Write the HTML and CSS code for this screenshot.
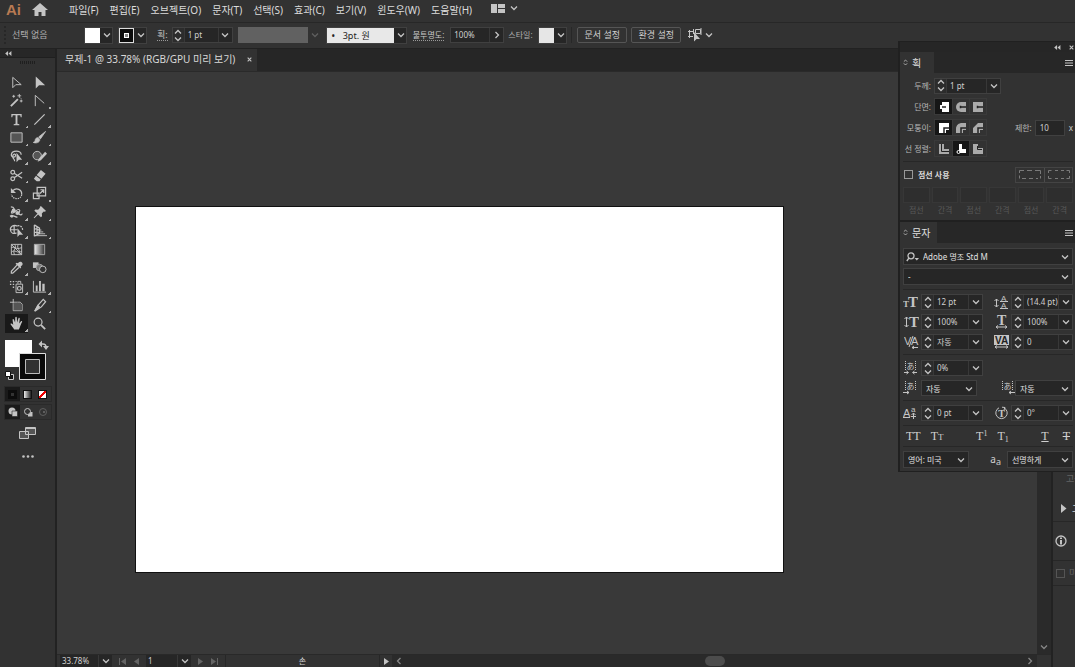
FILE: index.html
```html
<!DOCTYPE html>
<html lang="ko">
<head>
<meta charset="utf-8">
<title>무제-1</title>
<link rel="stylesheet" href="styles.css">
</head>
<body>
<svg class="defs" aria-hidden="true">
  <symbol id="down" viewBox="0 0 8 8"><path d="M1 2.500 4 5.500 7 2.500" class="line"/></symbol>
  <symbol id="right" viewBox="0 0 8 8"><path d="M2.500 1 5.500 4 2.500 7" class="line"/></symbol>
  <symbol id="left" viewBox="0 0 8 8"><path d="M5.500 1 2.500 4 5.500 7" class="line"/></symbol>
  <symbol id="up" viewBox="0 0 8 6"><path d="M1 4.500 4 1.500 7 4.500" class="line"/></symbol>
  <symbol id="dn" viewBox="0 0 8 6"><path d="M1 1.500 4 4.500 7 1.500" class="line"/></symbol>
  <symbol id="collapse" viewBox="0 0 8 6"><path d="M3.500 0v6L0 3zM7.500 0v6L4 3z"/></symbol>
  <symbol id="close" viewBox="0 0 6 6"><path d="M.8.8l4.400 4.400M5.200.8.8 5.200" class="line"/></symbol>
  <symbol id="lines" viewBox="0 0 8 6"><path d="M0 .5h8M0 3h8M0 5.500h8" class="thin"/></symbol>
  <symbol id="fold" viewBox="0 0 6 8"><path d="M1 3 3 1l2 2M1 5l2 2 2-2" class="thin"/></symbol>
</svg>
<div class="app">
  <header class="menubar">
    <span class="logo">Ai</span>
    <button class="home" aria-label="홈"><svg width="16" height="14" viewBox="0 0 16 14"><path d="M8 0 0 7h2.500v6h4V9h3v4h4V7H16z"/></svg></button>
    <nav class="menus">
      <button>파일(F)</button><button>편집(E)</button><button>오브젝트(O)</button><button>문자(T)</button><button>선택(S)</button><button>효과(C)</button><button>보기(V)</button><button>윈도우(W)</button><button>도움말(H)</button>
    </nav>
    <button class="workspace" aria-label="문서 정렬"><svg width="14" height="9" viewBox="0 0 14 9"><path d="M0 0h6v9H0zM7 0h7v4H7zM7 5h7v4H7z"/></svg><svg class="chev"><use href="#down"/></svg></button>
  </header>

  <div class="control">
    <span class="grip"></span>
    <span class="selection">선택 없음</span>
    <button class="swatch" aria-label="칠"><i class="chip white"></i><svg class="chev"><use href="#down"/></svg></button>
    <button class="swatch stroke" aria-label="획 색상"><i class="chip ring"><i></i></i><svg class="chev"><use href="#down"/></svg></button>
    <label class="dotted weight" for="c-weight">획:</label>
    <span class="num wide"><span class="spin"><button aria-label="증가"><svg><use href="#up"/></svg></button><button aria-label="감소"><svg><use href="#dn"/></svg></button></span><input id="c-weight" value="1 pt"><button class="drop" aria-label="목록"><svg class="chev"><use href="#down"/></svg></button></span>
    <button class="profile" aria-label="폭 프로파일" disabled><i></i><svg class="chev"><use href="#down"/></svg></button>
    <button class="brush"><span><b>•</b>3pt. 원</span><svg class="chev"><use href="#down"/></svg></button>
    <label class="dotted" for="c-op">불투명도:</label>
    <span class="num opacity"><input id="c-op" value="100%"><button class="drop" aria-label="불투명도 조절"><svg class="chev"><use href="#right"/></svg></button></span>
    <span class="stylelabel">스타일:</span>
    <button class="swatch style" aria-label="스타일"><i class="chip light"></i><svg class="chev"><use href="#down"/></svg></button>
    <span class="pair"><button class="outlined">문서 설정</button><button class="outlined">환경 설정</button></span>
    <button class="workspace align" aria-label="유사 오브젝트"><svg width="14" height="14" viewBox="0 0 14 14"><path class="thin" d="M0 3.500h6M0 8.500h5M1.500 2v8M7.500 1.500h5v4h-5zM5.500 1v5M13 0v7"/><path d="M6 4v9.500L8.500 11H12z"/></svg><svg class="chev"><use href="#down"/></svg></button>
  </div>

  <main class="work">
    <aside class="tools">
      <div class="toolshead"><svg width="7" height="5"><use href="#collapse"/></svg></div>
      <span class="toolgrip"></span>
      <div class="toolgrid">
        <button aria-label="선택"><svg viewBox="0 0 16 16"><path class="thin" d="M4 2.500v11l3.200-3.200H13z"/></svg></button>
        <button aria-label="직접 선택"><svg viewBox="0 0 16 16"><path d="M4 1.500v13L7.500 11H14z"/></svg></button>
        <button aria-label="자동 선택"><svg viewBox="0 0 16 16"><path class="fat" d="m2 14 7.500-7.500"/><path class="thin" d="M11 1v4M9 3h4M13 7v3M11.500 8.500h3M5 2v3M3.500 3.500h3M12 5l1 1"/></svg></button>
        <button class="more" aria-label="펜"><svg viewBox="0 0 16 16"><path class="thin" d="M3.500 14V2.500L13 11"/></svg></button>
        <button class="more" aria-label="문자 도구"><svg viewBox="0 0 16 16"><path d="M2.500 2h11v3.500h-1L12 3.500H9v9l2 .5v1H5v-1l2-.5v-9H4l-.5 2h-1z"/></svg></button>
        <button class="more" aria-label="선"><svg viewBox="0 0 16 16"><path class="line" d="M2.500 13.500 13.500 2.500"/></svg></button>
        <button class="more" aria-label="사각형"><svg viewBox="0 0 16 16"><path d="M2 3h12v10H2z" fill="#555" stroke="#c4c4c4"/></svg></button>
        <button class="more" aria-label="브러쉬"><svg viewBox="0 0 16 16"><path d="M14.500 1.500 7 7.500 9 9.500zM6.300 8.200c-2 0-2.800 1.300-3 3-.2 1.200-1 1.800-2 2 3 1.300 7 .3 7-3z" stroke="#c4c4c4" stroke-width=".8"/></svg></button>
        <button class="more" aria-label="물방울"><svg viewBox="0 0 16 16"><path class="line" d="M13 6c0-5-10-5-10.500 0-.2 3 4 3.500 4.500 1s-3-2-3 1 2 2 2 5"/><path d="M8 4v10l2.500-2.500H14z"/></svg></button>
        <button class="more" aria-label="Shaper"><svg viewBox="0 0 16 16"><circle cx="5.500" cy="7" r="4.500" fill="#555" stroke="#c4c4c4"/><path d="m6 13.500 1.500-3.500 6.500-7 2 2-6.500 7z"/></svg></button>
        <button class="more" aria-label="가위"><svg viewBox="0 0 16 16"><circle class="line" cx="4" cy="4.500" r="2"/><circle class="line" cx="4" cy="11.500" r="2"/><path class="line" d="m5.500 5.500 8.500 5.500M5.500 10.500 14 4.500"/></svg></button>
        <button aria-label="지우개"><svg viewBox="0 0 16 16"><path d="m9.500 2 5 4-4.500 5.500-5-4zM4.300 8.300l5 4L8 14H5L2 11.500z"/></svg></button>
        <button class="more" aria-label="회전"><svg viewBox="0 0 16 16"><path class="line" d="M4 5c4-4 10-1 9.500 4"/><path class="line" stroke-dasharray="1.500 1" d="M13.500 9c-.5 6-9.500 6-11 0"/><path d="M2 2v5.500h5.500z"/></svg></button>
        <button class="more" aria-label="크기 조절"><svg viewBox="0 0 16 16"><path class="line" d="M5.500 1.500h9v9h-9zM1.500 7.500h6v6h-6z"/><path class="line" d="M8.500 8 12 4.500M9 4h3.500v3.500"/></svg></button>
        <button class="more" aria-label="폭"><svg viewBox="0 0 16 16"><path class="line" d="M2 2c4 0 4 3 2 4s-2 4 1 2 4-4 6-3-2 4 0 5 3 0 3-1M1 12c4-2 5 1 8 1"/><circle cx="5" cy="6" r="2.200"/><circle cx="9" cy="8.500" r="2.200"/><circle cx="3" cy="12" r="1.500"/></svg></button>
        <button class="more" aria-label="퍼펫 뒤틀기"><svg viewBox="0 0 16 16"><path d="m9.500 1 5.500 5.500-1.500.7-1-.2-2 2 .2 3-1.200 1-3-3-4 4.200-.7-.7L5.800 9 2.500 6l1-1.200 3 .2 2-2-.2-1z"/></svg></button>
        <button class="more" aria-label="도형 구성"><svg viewBox="0 0 16 16"><path class="line" d="M9 3.500C5 1 1 4 1.500 7.500S5 12 8 10.500M5.500 3v8M1.500 7.200H9"/><path class="line" stroke-dasharray="2 1" d="M9 3c3-.5 5.500 1 5.500 4.500"/><path d="M9 5.500V15l2.200-2.500H15z"/></svg></button>
        <button class="more" aria-label="원근감"><svg viewBox="0 0 16 16"><path class="line" d="M2.500 2v12M2.500 2 8 5.500v5.500l-5.500 3M5.300 4v8.500M2.500 6 8 7.500M2.500 10H8"/><path class="thin" d="M8 7.500h2M8 9.500h4M7 11.500h7M4 13.500h12"/></svg></button>
        <button aria-label="메쉬"><svg viewBox="0 0 16 16"><path class="thin" d="M2.500 2.500h11v11h-11zM2.500 6c5-2 4 3 11 0M2.500 11c4-4 6 2 11-1M6 2.500c3 4-3 6 0 11M10 2.500c-3 4 4 7 0 11M2.500 2.500l11 11"/></svg></button>
        <button aria-label="그레이디언트"><svg viewBox="0 0 16 16"><defs><linearGradient id="g"><stop stop-color="#eee"/><stop offset="1" stop-color="#333"/></linearGradient></defs><path d="M2.500 2.500h11v11h-11z" fill="url(#g)" stroke="#aaa"/></svg></button>
        <button class="more" aria-label="스포이드"><svg viewBox="0 0 16 16"><path d="M10 3c2-3 6 0 4 2.500L12.500 7l.5 1-1 1-5-5 1-1 1 .5z"/><path class="line" d="m8.500 5.500-6 6.500v2h1.500l6.500-6"/></svg></button>
        <button aria-label="블렌드"><svg viewBox="0 0 16 16"><path d="M1 2.500h6v6H1z"/><circle cx="8" cy="8" r="3.500" fill="#777" stroke="#aaa"/><circle cx="11.500" cy="10" r="3.500" fill="#323232" stroke="#c4c4c4"/></svg></button>
        <button class="more" aria-label="심볼 분무기"><svg viewBox="0 0 16 16"><path class="thin" d="M7.500 5.500h7v9h-7zM9.500 5V2.500h3V5"/><circle class="line" cx="11" cy="10" r="2"/><path d="M1 2h1.500v1.500H1zM4 2h1.500v1.500H4zM1 5h1.500v1.500H1zM4 5h1.500v1.500H4zM7 2h1.200v1.200H7zM4 8h1.500v1.500H4z"/></svg></button>
        <button class="more" aria-label="그래프"><svg viewBox="0 0 16 16"><path class="thin" d="M1.500 2v12H15"/><path d="M4 7h2v6H4zM7.500 2h2v11h-2zM11 5h2.500v8H11z"/></svg></button>
        <button aria-label="대지"><svg viewBox="0 0 16 16"><path class="thin" d="M4.500 1v5M1 4.500h8M4.500 6v7.500h9.500v-7l-2-2H9"/><path d="M5 5h7l2 2v6H5z" fill="#555"/></svg></button>
        <button class="more" aria-label="분할 영역"><svg viewBox="0 0 16 16"><path d="M2 14.500 6 7l3 2.500z"/><path class="line" d="m7 7 5-5.500L14.500 4 10 9.500 3 14z"/></svg></button>
        <button class="more active" aria-label="손"><svg viewBox="0 0 16 16"><path d="M5.500 14.500C4.500 12 2.500 10.500 1.500 8.500c.8-.8 2-.3 3 1L3.800 4c.2-1 1.200-.9 1.500 0L6.500 7l.2-5.500c.3-.9 1.400-.9 1.600 0l.3 5.500 1.500-4.500c.5-.9 1.500-.5 1.400.5L10.800 8l2-2.500c.8-.5 1.500.2 1.100 1-1.400 2.500-1.900 5-3.400 8z"/></svg></button>
        <button aria-label="돋보기"><svg viewBox="0 0 16 16"><circle class="line" cx="6.500" cy="6.500" r="4.200"/><path class="fat" d="m9.800 9.800 4.200 4.200"/></svg></button>
      </div>
      <svg class="fillstroke" width="44" height="42" viewBox="0 0 44 42"><path d="M0 0h27v27H0z" fill="#fff"/><path d="M14.500 13.500h26v26h-26z" fill="#0a0a0a" stroke="#ddd"/><path d="M20.500 19.500h14v14h-14z" fill="#323232" stroke="#bbb"/><path class="line" d="M36 4h2c2 0 3 1 3 3"/><path d="M37 .5v7L33.500 4zM38 6h6l-3 4z"/><path d="M3.500 34.500h5v5h-5z" fill="#111" stroke="#ccc"/><path d="M.5 31.500h5v5h-5z" fill="#fff" stroke="#111"/></svg>
      <div class="modes"><button class="on" aria-label="색상"><i class="solid"></i></button><button aria-label="그레이디언트 칠"><i class="grad"></i></button><button aria-label="없음"><i class="none"></i></button></div>
      <div class="modes draw"><button class="on" aria-label="표준 그리기"><svg viewBox="0 0 10 10"><circle cx="4" cy="4" r="3.500"/><path d="M4 4h5.500v5.500H4z" stroke="#222" stroke-width=".6"/></svg></button><button aria-label="배경 그리기"><svg viewBox="0 0 10 10"><path d="M5 5h4.500v4.500H5z"/><circle cx="4.500" cy="4.500" r="3" fill="#333" stroke="#c4c4c4"/></svg></button><button aria-label="내부 그리기" disabled><svg viewBox="0 0 10 10"><circle class="thin" cx="5" cy="5" r="3.500"/><path d="M5 4h2v2H5z"/></svg></button></div>
      <button class="screen" aria-label="화면 모드"><svg width="17" height="12" viewBox="0 0 17 12"><path d="M.5 4.500h9v7h-9zM6.500.5h10v7h-10z" fill="#555" stroke="#c4c4c4"/><path d="M6.500 1.500h10" class="thin"/></svg></button>
      <button class="dots" aria-label="도구 모음 편집"><svg width="12" height="3" viewBox="0 0 12 3"><circle cx="1.500" cy="1.500" r="1.300"/><circle cx="6" cy="1.500" r="1.300"/><circle cx="10.500" cy="1.500" r="1.300"/></svg></button>
    </aside>

    <section class="doc">
      <div class="tabs"><div class="tab">무제-1 @ 33.78% (RGB/GPU 미리 보기)<button aria-label="닫기"><svg width="5" height="5"><use href="#close"/></svg></button></div></div>
      <div class="view">
        <div class="canvas"><div class="artboard"></div></div>
        <div class="vscroll"><svg class="chev"><use href="#down"/></svg></div>
      </div>
      <footer class="status">
        <input class="zoom" aria-label="확대/축소" value="33.78%"><button class="drop" aria-label="배율 목록"><svg class="chev"><use href="#down"/></svg></button>
        <span class="nav dim"><svg width="8" height="7" viewBox="0 0 8 7"><path d="M0 0h1v7H0zM7 0v7L2 3.500z"/></svg><svg width="5" height="7" viewBox="0 0 5 7"><path d="M5 0v7L0 3.500z"/></svg></span>
        <input class="page" aria-label="대지 번호" value="1"><button class="drop" aria-label="대지 목록"><svg class="chev"><use href="#down"/></svg></button>
        <span class="nav dim"><svg width="5" height="7" viewBox="0 0 5 7"><path d="M0 0v7l5-3.500z"/></svg><svg width="8" height="7" viewBox="0 0 8 7"><path d="M7 0h1v7H7zM1 0v7l5-3.500z"/></svg></span>
        <span class="toolname">손</span>
        <button class="play" aria-label="상태 메뉴"><svg width="5" height="7" viewBox="0 0 5 7"><path d="M0 0v7l5-3.500z"/></svg></button>
        <div class="hscroll"><svg class="chev"><use href="#left"/></svg><i></i><svg class="chev"><use href="#right"/></svg></div>
        <span class="corner"></span>
      </footer>
    </section>

    <aside class="dock">
      <p class="dim">고급</p>
      <p class="opener"><svg width="6" height="9" viewBox="0 0 6 9"><path d="M0 0v9l5.500-4.500z"/></svg>고급</p>
      <p class="info"><svg width="12" height="12" viewBox="0 0 12 12"><circle class="line" cx="6" cy="6" r="5"/><path d="M5 2.500h2v1.500H5zM5 5h2v4.500H5z"/></svg></p>
      <p class="dim check"><input type="checkbox" id="d-prev" disabled><label for="d-prev">미리 보기</label></p>
    </aside>
  </main>

  <div class="float">
    <div class="floathead"><button aria-label="접기"><svg width="7" height="5"><use href="#collapse"/></svg></button><button aria-label="패널 닫기"><svg width="5" height="5"><use href="#close"/></svg></button></div>
    <section>
      <div class="ptabs"><h2><svg width="5" height="7"><use href="#fold"/></svg>획</h2><button aria-label="획 패널 메뉴"><svg width="8" height="6"><use href="#lines"/></svg></button></div>
      <div class="strokebody">
        <div class="srow"><label for="s-w">두께:</label><span class="num thick"><span class="spin"><button aria-label="증가"><svg><use href="#up"/></svg></button><button aria-label="감소"><svg><use href="#dn"/></svg></button></span><input id="s-w" value="1 pt"><button class="drop" aria-label="목록"><svg class="chev"><use href="#down"/></svg></button></span></div>
        <div class="srow"><span>단면:</span><span class="seg"><button class="on" aria-label="절단형"><svg viewBox="0 0 10 10"><path d="M3 0h7v10H3V7H1V3h2z"/><path class="cut" d="M3 5h4"/></svg></button><button aria-label="둥근형"><svg viewBox="0 0 10 10"><path d="M5 0h5v10H5a5 5 0 0 1 0-10z"/><path class="cut" d="M5 5h5M4.500 3.800v2.400"/></svg></button><button aria-label="돌출형"><svg viewBox="0 0 10 10"><path d="M0 0h10v10H0z"/><path class="cut" d="M4 5h6M4.500 3.800v2.400"/></svg></button></span></div>
        <div class="srow"><span>모퉁이:</span><span class="seg"><button class="on" aria-label="각진 연결"><svg viewBox="0 0 10 10"><path d="M0 0h10v7H7v3H0z"/><path class="cut" d="M5 10V5H10"/></svg></button><button aria-label="둥근 연결"><svg viewBox="0 0 10 10"><path d="M10 0v7H7v3H0V6c0-4 3-6 6-6z"/><path class="cut" d="M5 10V5H10"/></svg></button><button aria-label="경사 연결"><svg viewBox="0 0 10 10"><path d="M10 0v7H7v3H0V5l5-5z"/><path class="cut" d="M5 10V5H10"/></svg></button></span><label class="limit" for="s-l">제한:</label><input id="s-l" class="limitbox" value="10"><span class="times">x</span></div>
        <div class="srow"><span>선 정렬:</span><span class="seg"><button aria-label="가운데 정렬"><svg viewBox="0 0 10 10"><path d="M0 0h5v5h5v5H0z"/><path class="cut thincut" d="M2.500 0v7.500H10"/></svg></button><button class="on" aria-label="안쪽 정렬"><svg viewBox="0 0 10 10"><path d="M3 0h3v5h4v4H3z"/><circle cx="2.500" cy="8" r="1.500" fill="#111" stroke="#fff"/></svg></button><button aria-label="바깥쪽 정렬"><svg viewBox="0 0 10 10"><path d="M0 0h5v4h5v6H0z"/><path class="cut thincut" d="M4.500 2v3.500H9"/></svg></button></span></div>
        <div class="dashrow"><input type="checkbox" id="s-d"><label for="s-d">점선 사용</label><span class="dashbtns"><button disabled aria-label="정확한 점선"><svg width="22" height="9" viewBox="0 0 22 9"><path class="thin" d="M.5 8.500v-3M.5 3V.5H5M8 .5h5M16 .5h5.500V4M21.500 6v2.500M3 8.500h4M10 8.500h4M17 8.500h2"/></svg></button><button disabled aria-label="정렬된 점선"><svg width="22" height="9" viewBox="0 0 22 9"><path class="thin" d="M3.500.5h-3v2.500M.5 6v2.500h3M7 .5h3M13 .5h3M18.500.5h3v2.500M21.500 6v2.500h-3M7 8.500h3M13 8.500h3"/></svg></button></span></div>
        <div class="dashes"><label><input disabled>점선</label><label><input disabled>간격</label><label><input disabled>점선</label><label><input disabled>간격</label><label><input disabled>점선</label><label><input disabled>간격</label></div>
      </div>
    </section>
    <section>
      <div class="ptabs second"><h2><svg width="5" height="7"><use href="#fold"/></svg>문자</h2><button aria-label="문자 패널 메뉴"><svg width="8" height="6"><use href="#lines"/></svg></button></div>
      <div class="charbody">
        <div class="fonts">
          <span class="sel family"><svg class="mag" width="13" height="10" viewBox="0 0 13 10"><circle class="line" cx="5" cy="3.800" r="3"/><path class="line" d="M3 6 .8 9"/><path d="M8.500 6H13l-2.200 2.500z"/></svg><select aria-label="글꼴"><option>Adobe 명조 Std M</option></select><svg class="chev"><use href="#down"/></svg></span>
          <span class="sel"><select aria-label="글꼴 스타일"><option>-</option></select><svg class="chev"><use href="#down"/></svg></span>
        </div>
        <div class="fields">
          <svg class="ic" viewBox="0 0 15 14"><text x="0" y="12" class="g" font-size="9">T</text><text x="5" y="12" class="g" font-size="15">T</text></svg><span class="num"><span class="spin"><button aria-label="증가"><svg><use href="#up"/></svg></button><button aria-label="감소"><svg><use href="#dn"/></svg></button></span><input aria-label="글꼴 크기" value="12 pt"><button class="drop" aria-label="목록"><svg class="chev"><use href="#down"/></svg></button></span>
          <svg class="ic" viewBox="0 0 15 14"><path class="thin" d="M2.500 4v8M.5 6l2-2 2 2M.5 10l2 2 2-2M6 13.500h8M6 6.500h8"/><text x="7" y="5.500" class="a" font-size="8">A</text><text x="7" y="12.500" class="a" font-size="8">A</text></svg><span class="num"><span class="spin"><button aria-label="증가"><svg><use href="#up"/></svg></button><button aria-label="감소"><svg><use href="#dn"/></svg></button></span><input aria-label="행간" value="(14.4 pt)"><button class="drop" aria-label="목록"><svg class="chev"><use href="#down"/></svg></button></span>
          <svg class="ic" viewBox="0 0 15 14"><path class="thin" d="M2.500 2v10M.5 4l2-2 2 2M.5 10l2 2 2-2"/><text x="5" y="12" class="g" font-size="15">T</text></svg><span class="num"><span class="spin"><button aria-label="증가"><svg><use href="#up"/></svg></button><button aria-label="감소"><svg><use href="#dn"/></svg></button></span><input aria-label="세로 비율" value="100%"><button class="drop" aria-label="목록"><svg class="chev"><use href="#down"/></svg></button></span>
          <svg class="ic" viewBox="0 0 15 14"><text x="3" y="9.500" class="g" font-size="14">T</text><path class="thin" d="M2 12h11M4 10.500 2 12l2 1.500M11 10.500l2 1.500-2 1.500"/></svg><span class="num"><span class="spin"><button aria-label="증가"><svg><use href="#up"/></svg></button><button aria-label="감소"><svg><use href="#dn"/></svg></button></span><input aria-label="가로 비율" value="100%"><button class="drop" aria-label="목록"><svg class="chev"><use href="#down"/></svg></button></span>
          <svg class="ic" viewBox="0 0 15 14"><text x="0" y="10" class="a" font-size="11">V</text><text x="7" y="10" class="a" font-size="11">A</text><path class="thin" d="M9 1 5 12M8 12.500h6M10 11l-2 1.500 2 1.500"/></svg><span class="num"><span class="spin"><button aria-label="증가"><svg><use href="#up"/></svg></button><button aria-label="감소"><svg><use href="#dn"/></svg></button></span><input aria-label="자간 커닝" value="자동"><button class="drop" aria-label="목록"><svg class="chev"><use href="#down"/></svg></button></span>
          <svg class="ic" viewBox="0 0 15 14"><path d="M0 0h15v10H0z"/><text x="1" y="9" class="a dark" font-size="10">VA</text><path class="thin" d="M1 12h13M3 10.500 1 12l2 1.500M12 10.500l2 1.500-2 1.500"/></svg><span class="num"><span class="spin"><button aria-label="증가"><svg><use href="#up"/></svg></button><button aria-label="감소"><svg><use href="#dn"/></svg></button></span><input aria-label="자간" value="0"><button class="drop" aria-label="목록"><svg class="chev"><use href="#down"/></svg></button></span>
        </div>
        <div class="spacing">
          <div class="fields plain">
            <svg class="ic" viewBox="0 0 15 14"><path class="thin" stroke-dasharray="1 1" d="M2.500 0v9M12.500 0v9"/><text x="3.500" y="8" class="k" font-size="8">あ</text><path class="thin" d="M1 11.500h4M3.500 10l2 1.500-2 1.500M14 11.500h-4M11.500 10l-2 1.500 2 1.500"/></svg><span class="num"><span class="spin"><button aria-label="증가"><svg><use href="#up"/></svg></button><button aria-label="감소"><svg><use href="#dn"/></svg></button></span><input aria-label="문자 간격 조정" value="0%"><button class="drop" aria-label="목록"><svg class="chev"><use href="#down"/></svg></button></span>
          </div>
          <div class="autos">
            <svg class="ic" viewBox="0 0 15 14"><path class="thin" stroke-dasharray="1 1" d="M2.500 0v9M12.500 0v9"/><text x="3.500" y="8" class="k" font-size="8">あ</text><path class="thin" d="M0 11.500h6M4 10l2 1.500L4 13"/></svg><span class="sel"><select aria-label="왼쪽 간격"><option>자동</option></select><svg class="chev"><use href="#down"/></svg></span>
            <svg class="ic" viewBox="0 0 15 14"><path class="thin" stroke-dasharray="1 1" d="M2.500 0v9M12.500 0v9"/><text x="3.500" y="8" class="k" font-size="8">あ</text><path class="thin" d="M15 11.500H9M11 10l-2 1.500 2 1.500"/></svg><span class="sel"><select aria-label="오른쪽 간격"><option>자동</option></select><svg class="chev"><use href="#down"/></svg></span>
          </div>
        </div>
        <div class="fields">
          <svg class="ic" viewBox="0 0 15 14"><text x="0" y="10.500" class="a" font-size="11">A</text><text x="8" y="6" class="a" font-size="8">a</text><path class="thin" d="M0 11.500h7M10.500 7v6M8.500 9l2-2 2 2M8 10.500h5"/></svg><span class="num"><span class="spin"><button aria-label="증가"><svg><use href="#up"/></svg></button><button aria-label="감소"><svg><use href="#dn"/></svg></button></span><input aria-label="기준선 이동" value="0 pt"><button class="drop" aria-label="목록"><svg class="chev"><use href="#down"/></svg></button></span>
          <svg class="ic" viewBox="0 0 15 14"><path class="thin" d="M5 1.800a5.700 5.700 0 1 0 5 0M8 1.200l3 .3-1 2.500"/><text x="4.200" y="10.500" class="g" font-size="10">T</text></svg><span class="num"><span class="spin"><button aria-label="증가"><svg><use href="#up"/></svg></button><button aria-label="감소"><svg><use href="#dn"/></svg></button></span><input aria-label="문자 회전" value="0°"><button class="drop" aria-label="목록"><svg class="chev"><use href="#down"/></svg></button></span>
        </div>
        <div class="caps"><span><button>TT</button><button>T<small>T</small></button></span><span><button>T<sup>1</sup></button><button>T<sub>1</sub></button></span><span><button class="u">T</button><button class="st">T</button></span></div>
        <div class="lang"><span class="sel"><select aria-label="언어"><option>영어: 미국</option></select><svg class="chev"><use href="#down"/></svg></span><span class="aa">a<sub>a</sub></span><span class="sel"><select aria-label="앤티 앨리어스"><option>선명하게</option></select><svg class="chev"><use href="#down"/></svg></span></div>
      </div>
    </section>
  </div>
</div>
</body>
</html>
```
FILE: styles.css
```css
:root {
  --bg: #323232;
  --field: #262626;
  --edge: #404040;
  --ink: #c4c4c4;
  --rule: #272727;
}
* { box-sizing: border-box; }
body {
  margin: 0;
  background: var(--bg);
  color: #d0d0d0;
  font: 9px/12px "Noto Sans", "Noto Sans CJK KR", sans-serif;
}
button, input, select { font: inherit; color: inherit; margin: 0; padding: 0; border: 0; border-radius: 0; background: none; min-width: 0; }
button { display: flex; align-items: center; justify-content: center; }
h2, p { margin: 0; font-weight: normal; }
svg { display: block; fill: var(--ink); flex: none; }
.defs { position: absolute; width: 0; height: 0; }
.line, .thin, .fat { fill: none; stroke: var(--ink); stroke-width: 1.3px; }
.thin { stroke-width: 1px; }
.fat { stroke-width: 2px; }
.chev { width: 8px; height: 8px; }
i { display: block; }

.app { position: relative; height: 100vh; min-height: 560px; display: flex; flex-direction: column; overflow: hidden; }

/* menu bar */
.menubar { height: 22px; display: flex; align-items: center; padding-bottom: 3px; flex: none; }
.logo { width: 32px; padding-left: 6px; font: bold 15px/18px "Liberation Sans", sans-serif; color: #b87a52; }
.home { width: 16px; }
.menus { display: flex; gap: 11px; margin-left: 21px; font-size: 10px; line-height: 14px; color: #dcdcdc; }
.menus button { white-space: nowrap; }
.workspace { gap: 5px; margin-left: 19px; }
.menubar .workspace { margin-bottom: 3px; }

/* control bar */
.control { height: 26px; display: flex; align-items: center; border-top: 1px solid var(--rule); flex: none; white-space: nowrap; padding-bottom: 1px; }
.grip { width: 4px; height: 18px; margin: 0 4px; border-left: 2px dotted #272727; }
.selection { width: 71px; color: #b0b0b0; }
.swatch { width: 29px; height: 17px; justify-content: space-between; background: var(--field); border: 1px solid var(--edge); padding-right: 1px; margin-left: 1px; }
.swatch.stroke { margin-left: 5px; }
.chip { width: 15px; height: 15px; background: #fff; }
.chip.light { background: #e6e6e6; }
.chip.ring { background: #0c0c0c; border: 1px solid #ddd; padding: 4px; }
.chip.ring i { width: 5px; height: 5px; border: 1px solid #fff; background: #888; }
.dotted { border-bottom: 1px dotted #999; line-height: 11px; color: #c8c8c8; }
.weight { margin: 0 4px 0 10px; }
.num { display: flex; height: 16px; background: var(--field); border: 1px solid var(--edge); }
.num input { flex: 1; width: 0; padding: 0 3px; font-size: 8px; }
.num .drop { width: 14px; border-left: 1px solid #383838; }
.spin { width: 12px; display: flex; flex-direction: column; justify-content: center; gap: 1px; border-right: 1px solid #383838; background: #2c2c2c; flex: none; }
.spin button { height: 6px; width: 11px; }
.spin svg { width: 8px; height: 6px; }
.num.wide { width: 61px; }
.profile { margin-left: 5px; width: 82px; gap: 3px; padding-right: 1px; }
.profile i { flex: 1; height: 16px; background: #616161; }
.profile svg { opacity: .3; }
.brush { margin-left: 6px; width: 81px; height: 17px; background: var(--field); border: 1px solid var(--edge); gap: 3px; padding-right: 1px; }
.brush span { flex: 1; display: flex; gap: 8px; padding-left: 5px; height: 15px; line-height: 15px; background: #e8e8e8; color: #222; }
.brush b { font-size: 8px; }
.brush + .dotted { margin-left: 6px; font-size: 8px; }
.opacity { width: 54px; margin-left: 6px; }
.stylelabel { margin-left: 4px; width: 29px; font-size: 8px; color: #b0b0b0; }
.pair { display: flex; gap: 4px; margin-left: 4px; padding-left: 5px; border-left: 1px solid var(--rule); }
.outlined { width: 50px; height: 16px; border: 1px solid #555; border-radius: 2px; font-size: 9px; }
.workspace.align { margin-left: 7px; gap: 3px; }

/* workspace */
.work { flex: 1; display: flex; min-height: 0; border-top: 1px solid #222; }
.tools { width: 57px; border-right: 2px solid #222; flex: none; }
.toolshead { height: 9px; background: #272727; padding: 2px 0 0 5px; border-bottom: 1px solid #1f1f1f; }
.toolgrip { display: block; width: 15px; height: 3px; margin: 3px 0 9px 20px; background: repeating-linear-gradient(90deg, #1f1f1f 0 1px, #323232 1px 2px); }
.toolgrid { display: grid; grid-template-columns: 23px 23px; grid-template-rows: repeat(14, 1fr); height: 260px; margin-left: 5px; }
.toolgrid svg { width: 15px; height: 15px; }
.toolgrid button { min-height: 0; }
.more { background: linear-gradient(135deg, transparent 50%, #b0b0b0 50%) right 0 bottom 1px / 3px 3px no-repeat; }
.active { background-color: #191919; }
.fillstroke { margin: 7px 0 0 5px; }
.modes { display: grid; grid-template-columns: repeat(3, 15px); margin: 4px 0 0 4px; border: 1px solid #2a2a2a; width: 48px; }
.modes button { height: 14px; }
.modes .on { background: #1a1a1a; }
.modes i { width: 9px; height: 9px; border: 1px solid #111; }
.modes .grad { background: linear-gradient(90deg, #eee, #222); }
.modes .none { background: linear-gradient(135deg, #fff 38%, #e00 38% 62%, #fff 62%); }
.modes .solid { background: #333; border: 3px solid #0c0c0c; }
.modes.draw { margin-top: 2px; }
.modes svg { width: 10px; height: 10px; }
.modes button:disabled { opacity: .3; }
.screen { margin: 7px 0 0 19px; }
.dots { margin: 16px 0 0 22px; }

.doc { flex: 1; min-width: 0; display: flex; flex-direction: column; }
.tabs { height: 22px; background: #262626; display: flex; flex: none; }
.tab { display: flex; align-items: center; gap: 12px; padding: 0 5px 2px 8px; background: var(--bg); font-size: 10px; white-space: nowrap; color: #d8d8d8; }
.view { flex: 1; display: flex; min-height: 0; border-top: 1px solid #2a2a2a; }
.canvas { flex: 1; background: #393939; overflow: hidden; min-width: 0; }
.artboard { width: 649px; height: 367px; margin: 134px 0 0 78px; background: #fff; border: 1px solid #111; }
.vscroll { width: 14px; background: #2a2a2a; display: flex; align-items: flex-end; justify-content: center; padding-bottom: 3px; }
.vscroll svg, .hscroll svg { opacity: .6; }
.status { height: 13px; display: flex; align-items: center; background: var(--bg); border-top: 1px solid #292929; flex: none; font-size: 8px; }
.status input { height: 12px; background: var(--field); }
.zoom { width: 38px; margin-left: 3px; }
.zoom, .page { padding-left: 2px; }
.page { width: 31px; }
.status .drop { width: 14px; height: 12px; background: var(--field); border-left: 1px solid #383838; }
.nav { display: flex; gap: 7px; padding: 0 7px; }
.dim { color: #646464; }
.nav.dim svg { fill: #646464; }
.toolname { width: 155px; text-align: center; border-left: 1px solid var(--rule); border-right: 1px solid var(--rule); }
.play { width: 12px; }
.hscroll { flex: 1; height: 12px; background: #2a2a2a; display: flex; justify-content: space-between; align-items: center; padding: 0 3px; }
.hscroll i { width: 20px; height: 10px; border-radius: 5px; background: #4c4c4c; }
.corner { width: 14px; }

.dock { width: 24px; border-left: 2px solid #222; padding-top: 417px; overflow: hidden; white-space: nowrap; flex: none; }
.dock p { height: 25px; display: flex; align-items: center; padding-left: 13px; }
.dock .opener { height: 31px; padding: 5px 0 0 8px; gap: 5px; border-bottom: 1px solid var(--rule); }
.dock .info { height: 39px; padding-left: 2px; border-bottom: 1px solid var(--rule); }
.dock .check { padding-left: 3px; gap: 4px; border-bottom: 1px solid var(--rule); }
input[type="checkbox"] { appearance: none; width: 9px; height: 9px; border: 1px solid #999; flex: none; }
input[type="checkbox"]:disabled { border-color: #555; }

/* floating panels */
.float { position: absolute; top: 41px; right: 0; width: 177px; background: var(--bg); border: solid #202020; border-width: 1px 0 1px 2px; }
.floathead { height: 10px; background: #262626; display: flex; justify-content: flex-end; gap: 8px; padding-right: 1px; }
.ptabs { height: 21px; background: #272727; display: flex; justify-content: space-between; align-items: center; padding-right: 2px; }
.ptabs h2 { height: 21px; display: flex; align-items: center; gap: 4px; padding: 0 13px 0 3px; background: var(--bg); font-size: 10px; color: #e0e0e0; }
.ptabs.second { border-top: 2px solid #202020; height: 23px; }
.ptabs.second h2 { padding-right: 7px; }
.strokebody { padding: 2px 2px 4px 3px; }
.srow { display: flex; align-items: center; height: 21px; }
.srow > :first-child { flex: none; width: 31px; text-align: right; white-space: nowrap; padding-right: 3px; font-size: 8px; color: #b8b8b8; }
.num.thick { width: 67px; }
.seg { display: flex; border: 1px solid #3a3a3a; }
.seg button { width: 17px; height: 15px; }
.seg button + button { border-left: 1px solid #3a3a3a; }
.seg svg { width: 10px; height: 10px; fill: #aaa; }
.seg .on { background: #161616; }
.seg .on svg { fill: #fff; }
.cut { fill: none; stroke: #222; stroke-width: 1.5px; }
.thincut { stroke-width: 1px; }
.limit { margin-left: auto; font-size: 8px; color: #b8b8b8; }
.limitbox { width: 30px; height: 16px; margin: 0 4px 0 3px; padding-left: 4px; background: var(--field); border: 1px solid var(--edge); font-size: 8px; }
.times { font-size: 8px; }
.dashrow { display: flex; align-items: center; gap: 5px; height: 26px; margin-top: 2px; border-top: 1px solid var(--rule); padding-left: 1px; color: #d8d8d8; }
.dashrow label { font-size: 8px; font-weight: 600; }
.dashbtns { display: flex; margin-left: auto; border: 1px solid #444; }
.dashbtns button { width: 28px; height: 14px; opacity: .5; }
.dashbtns button + button { border-left: 1px solid #666; }
.dashes { display: grid; grid-template-columns: repeat(6, 1fr); gap: 2px; }
.dashes label { display: flex; flex-direction: column; text-align: center; font-size: 8px; color: #585858; gap: 1px; }
.dashes input { height: 16px; width: 100%; background: #2e2e2e; border: 1px solid #373737; }

.charbody { padding: 5px 2px 3px 3px; }
.sel { display: grid; grid-template-columns: auto 1fr 13px; align-items: center; height: 17px; background: var(--field); border: 1px solid var(--edge); }
.sel select { appearance: none; grid-area: 1 / 2 / 2 / 4; padding-left: 4px; height: 15px; font-size: 8px; color: #e0e0e0; }
.sel .chev { grid-area: 1 / 3; pointer-events: none; margin-left: 2px; }
.mag { margin-left: 2px; }
.fonts { display: grid; gap: 3px; padding-bottom: 4px; }
.fields { display: grid; grid-template-columns: 18px 1fr 28px 1fr; row-gap: 4px; align-items: center; border-top: 1px solid var(--rule); padding: 4px 0; }
.fields.plain { border: 0; padding: 0; }
.ic { width: 15px; height: 14px; }
.num + .ic { justify-self: end; margin-right: 2px; }
.fields .num input { padding-left: 3px; padding-right: 0; }
.spacing { display: grid; gap: 4px; border-top: 1px solid var(--rule); padding: 5px 0 4px; }
.autos { display: grid; grid-template-columns: 18px 56px 1fr 58px; align-items: center; }
.autos .sel { height: 16px; }
.sel + .ic { justify-self: end; }
.g { font-family: "Liberation Serif", serif; font-weight: bold; }
.a { font-family: "Liberation Sans", sans-serif; }
.dark { fill: #222; font-weight: bold; }
.k { font-family: "Noto Sans CJK JP", sans-serif; }
.caps { display: flex; justify-content: space-between; height: 22px; padding: 0 3px; border-top: 1px solid var(--rule); border-bottom: 1px solid var(--rule); font: 12px/18px "Liberation Serif", serif; }
.caps span { display: flex; gap: 10px; }
.caps span:last-child { gap: 14px; }
.caps button { display: block; font-size: 12px; }
.caps small { font-size: 9px; }
.caps sup, .caps sub { font-size: 8px; line-height: 8px; }
.caps sup { vertical-align: 4px; }
.caps sub { vertical-align: -2px; }
.caps .u { text-decoration: underline; }
.caps .st { text-decoration: line-through; }
.lang { display: grid; grid-template-columns: 66px 1fr 66px; align-items: center; padding-top: 4px; }
.aa { text-align: right; padding-right: 6px; font-size: 10px; }
.aa sub { font-size: 9px; vertical-align: -2px; line-height: 8px; }
```
